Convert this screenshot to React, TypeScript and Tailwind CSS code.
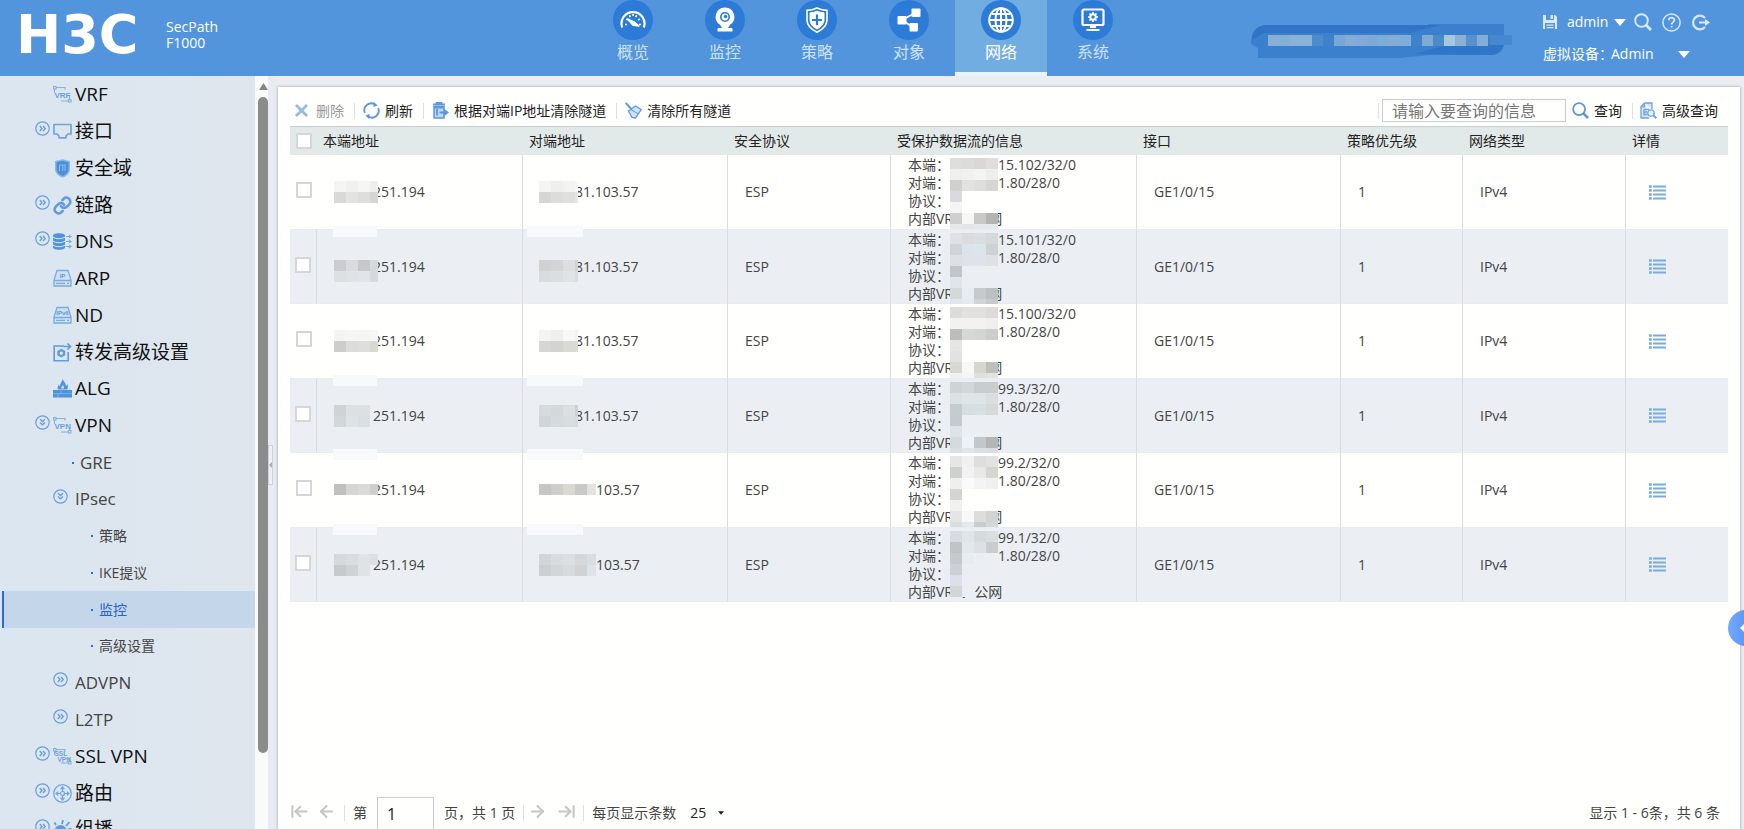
import type { ReactNode } from "react";
import { ArrowLeft, ArrowLeftToLine, ArrowRight, ArrowRightToLine, Link, X } from "lucide-react";

/* ---------- navigation icons (26x26 inside the blue disc) ---------- */

const GaugeIcon = () => (
  <svg viewBox="0 0 26 26" className="size-[26px]" fill="none" stroke="white" strokeWidth="2.2">
    <path d="M2.2 20.500A11.500 11.500 0 1 1 23.8 20.500" />
    <path d="M5 17.500h2M19 17.500h2M6.200 12l1.700 1.200M19.800 12l-1.700 1.200M9.500 8.200l.8 1.900M16.500 8.200l-.8 1.900M13 7v2" strokeWidth="1.600" />
    <path d="M7.500 12l6.500 2.800 5 4.200-6-.6z" fill="white" strokeWidth="1.400" strokeLinejoin="round" />
  </svg>
);

const CameraIcon = () => (
  <svg viewBox="0 0 26 26" className="size-[26px]">
    <path d="M13 .5a9.300 9.300 0 0 1 5 17.200l-2 3.300h3.500a1 1 0 0 1 1 1v2.500h-15V22a1 1 0 0 1 1-1H10l-2-3.300A9.300 9.300 0 0 1 13 .5z" fill="white" />
    <circle cx="13" cy="10" r="5" fill="#2b7bd7" />
    <circle cx="13" cy="10" r="3.400" fill="white" />
    <circle cx="13.500" cy="9.500" r="1.700" fill="#2b7bd7" />
  </svg>
);

const ShieldIcon = () => (
  <svg viewBox="0 0 26 26" className="size-[26px]" fill="none" stroke="white">
    <path d="M13 1c3 1.500 6.300 2.400 10 2.400v9.400c0 5.500-4.300 9.700-10 12.400C7.300 22.500 3 18.300 3 12.800V3.400C6.700 3.400 10 2.500 13 1z" strokeWidth="1.600" />
    <path d="M13 4.200c2.300 1 4.600 1.600 7 1.700v6.900c0 4-2.900 7-7 9.200-4.100-2.200-7-5.200-7-9.200V5.900c2.400-.1 4.700-.7 7-1.700z" fill="white" strokeWidth="1" />
    <path d="M13 7.500v10.500M8 13h10" stroke="#2b7bd7" strokeWidth="2.200" />
  </svg>
);

const ObjectIcon = () => (
  <svg viewBox="0 0 26 26" className="size-[26px]" fill="white">
    <path d="M6 13 19 6M6 13l12 8" stroke="white" strokeWidth="1.800" />
    <rect x="1.500" y="9" width="9" height="8.500" rx="1" />
    <rect x="15.500" y="1.500" width="9" height="8.500" rx="1" />
    <rect x="13.500" y="16" width="8.500" height="8.500" rx="1" />
  </svg>
);

const GlobeIcon = () => (
  <svg viewBox="0 0 26 26" className="size-[26px]" fill="none" stroke="white" strokeWidth="2">
    <circle cx="13" cy="13" r="11.800" />
    <ellipse cx="13" cy="13" rx="5.500" ry="11.800" />
    <path d="M13 1.500v23M1.500 13h23M3.500 7h19M3.500 19h19" />
  </svg>
);

const SystemIcon = () => (
  <svg viewBox="0 0 26 26" className="size-[26px]" fill="none" stroke="white">
    <rect x="2.500" y="2.500" width="21" height="15.500" rx="1.500" strokeWidth="2.200" />
    <circle cx="13" cy="10" r="2.700" strokeWidth="2" />
    <path d="M13 5v2M13 13v2M8 10h2M16 10h2M9.500 6.500l1.400 1.400M15.100 12.100l1.400 1.400M16.500 6.500l-1.400 1.400M10.900 12.100l-1.400 1.400" strokeWidth="1.600" />
    <path d="M13 18v3" strokeWidth="6" />
    <path d="M6.500 23h13" strokeWidth="2" />
  </svg>
);

/* ---------- sidebar icons ---------- */

const svgClass = "size-[19px]";

const Tag = ({ lines }: { lines: string[] }) => (
  <svg viewBox="0 0 19 19" className={svgClass} fill="none" stroke="#84b0e2" strokeWidth="1.100">
    <path d="M3 2.500h9v2M1.500 4v4M8 16h8M16.500 11v4" />
    <rect x="0.500" y="1.500" width="2.500" height="2.500" />
    <rect x="15.500" y="14.500" width="2.500" height="2.500" />
    {lines.map((t, i) => (
      <text key={t} x={1.500 + i * 3} y={(lines.length > 1 ? 8.500 : 12.500) + i * 6} fontSize={lines.length > 1 ? 6.500 : 8} fontWeight="700" fill="#6a9fdd" stroke="none" fontFamily="Liberation Sans, sans-serif">
        {t}
      </text>
    ))}
  </svg>
);

const PortIcon = () => (
  <svg viewBox="0 0 19 19" className={svgClass} fill="none" stroke="#6ea4e0" strokeWidth="1.700">
    <path d="M1 2.500h17v9.500h-3l-2 2v1.800H6V14l-2-2H1z" strokeLinejoin="round" />
  </svg>
);

const ZoneIcon = () => (
  <svg viewBox="0 0 19 19" className={svgClass}>
    <path d="M9.500.2L17 2v8c0 4.200-3.200 7-7.500 8.800C5.200 17 2 14.200 2 10V2z" fill="#8ab6e8" />
    <path d="M9.500 1.800l6 1.500V10c0 3.200-2.500 5.500-6 7-3.500-1.500-6-3.800-6-7V3.300z" fill="#4a8fdc" />
    <path d="M6.500 6v6M12 6v6M9.800 6v6M6.500 6H13" stroke="#8fbbec" strokeWidth="1" />
  </svg>
);

const DnsIcon = () => (
  <svg viewBox="0 0 19 19" className={svgClass}>
    <path d="M0 3.500C0 .5 12 .5 12 3.500v12c0 3-12 3-12 0z" fill="#4f93dc" />
    <path d="M0 5c2 2.200 10 2.200 12 0M0 9c2 2.200 10 2.200 12 0M0 13c2 2.200 10 2.200 12 0" stroke="#dfe8f1" fill="none" strokeWidth="1" />
    <path d="M13 4.500h4M13 9.500h4M13 14.500h4" stroke="#76aae2" strokeWidth="1.200" />
    <path d="M16 2.500l3 2-3 2zM16 7.500l3 2-3 2zM16 12.500l3 2-3 2z" fill="#76aae2" />
  </svg>
);

const DriveIcon = ({ text }: { text: string }) => (
  <svg viewBox="0 0 19 19" className={svgClass} fill="none" stroke="#79abe2" strokeWidth="1.300">
    <path d="M4 1.500h11l3 9.500v6H1v-6z" fill="#cfe0f3" />
    <path d="M1 11.500h17M3 14.300h9M14 14.300h2" />
    <text x="9.500" y="8.800" textAnchor="middle" fontSize="6" fontWeight="700" fill="#5a97dc" stroke="none" fontFamily="Liberation Sans, sans-serif">
      {text}
    </text>
  </svg>
);

const ForwardIcon = () => (
  <svg viewBox="0 0 19 19" className={svgClass} fill="none" stroke="#5f9bde" strokeWidth="1.600">
    <path d="M11 3H1.200v14.800h14V9" />
    <path d="M10.500 3.500h7M14.500.5l3 3-3 3" />
    <path d="M8.300 5.800l4 2.200v4.300l-4 2.200-4-2.200V8z" fill="#5f9bde" stroke="none" />
    <circle cx="8.300" cy="10.200" r="1.600" fill="#dfe8f1" stroke="none" />
  </svg>
);

const AlgIcon = () => (
  <svg viewBox="0 0 19 19" className={svgClass}>
    <path d="M9.500 0c1 2.500 3.500 4 3.500 7 1-.5 1-1.500 1-2 1.500 2 1 4 0 5.500H5C4 8.500 5 6.500 6 5.500c0 1 .5 1.500 1 1.500C7 4.500 9 3 9.500 0z" fill="#4f93dc" />
    <path d="M0 11h19v7.500H0z" fill="#4f93dc" />
    <path d="M0 14.700h19M8 11v3.500M5 15v3.500" stroke="#8fbbec" strokeWidth=".7" />
    <path d="M8 9.500c0-1.500 1.500-2 1.500-3.500 1 1 2 2 1.500 3.500z" fill="#c9def5" />
  </svg>
);

const RouteIcon = () => (
  <svg viewBox="0 0 19 19" className={svgClass} fill="none" stroke="#6ea4e0" strokeWidth="1.200">
    <circle cx="9.500" cy="9.500" r="8.800" />
    <circle cx="9.500" cy="9.500" r="2" />
    <path d="M9.500 2l2.600 3.200H6.900zM9.500 17l2.600-3.200H6.900zM2 9.500l3.200-2.600v5.200zM17 9.500l-3.200-2.600v5.200z" fill="#6ea4e0" stroke="none" />
    <path d="M9.500 4.500v3M9.500 11.500v3M4.500 9.500h3M11.500 9.500h3" />
  </svg>
);

const CastIcon = () => (
  <svg viewBox="0 0 19 19" className={svgClass}>
    <circle cx="7.500" cy="11" r="6" fill="#5f9bde" />
    <path d="M9 4L10 0M13 6l3.500-4M14.500 9.500l4-1M3 5L1.500 2.500" stroke="#5f9bde" strokeWidth="1.800" />
  </svg>
);

const Expander = ({ open }: { open?: boolean }) => (
  <svg viewBox="0 0 15 15" className="mb-1.5 size-[15px] shrink-0" fill="none" stroke="#6a9fdc" strokeWidth="1.200">
    <circle cx="7.500" cy="7.500" r="6.700" />
    <path d={open ? "M5 4.300l2.500 2.200L10 4.300M5 7.500l2.500 2.200L10 7.500" : "M4.800 5L7 7.500 4.800 10M8 5l2.200 2.500L8 10"} strokeWidth="1.400" />
  </svg>
);

/* ---------- data ---------- */

const navItems = [
  { label: "概览", icon: <GaugeIcon /> },
  { label: "监控", icon: <CameraIcon /> },
  { label: "策略", icon: <ShieldIcon /> },
  { label: "对象", icon: <ObjectIcon /> },
  { label: "网络", icon: <GlobeIcon />, active: true },
  { label: "系统", icon: <SystemIcon /> },
];

type MenuItem = {
  label: string;
  level: 1 | 2 | 3;
  icon?: ReactNode;
  expand?: "open" | "closed";
  active?: boolean;
};

const menu: MenuItem[] = [
  { label: "VRF", level: 1, icon: <Tag lines={["VRF"]} /> },
  { label: "接口", level: 1, icon: <PortIcon />, expand: "closed" },
  { label: "安全域", level: 1, icon: <ZoneIcon /> },
  { label: "链路", level: 1, icon: <Link className="size-[19px] text-[#5f9bde]" strokeWidth={3.200} />, expand: "closed" },
  { label: "DNS", level: 1, icon: <DnsIcon />, expand: "closed" },
  { label: "ARP", level: 1, icon: <DriveIcon text="IP" /> },
  { label: "ND", level: 1, icon: <DriveIcon text="IPv6" /> },
  { label: "转发高级设置", level: 1, icon: <ForwardIcon /> },
  { label: "ALG", level: 1, icon: <AlgIcon /> },
  { label: "VPN", level: 1, icon: <Tag lines={["VPN"]} />, expand: "open" },
  { label: "GRE", level: 2 },
  { label: "IPsec", level: 2, expand: "open" },
  { label: "策略", level: 3 },
  { label: "IKE提议", level: 3 },
  { label: "监控", level: 3, active: true },
  { label: "高级设置", level: 3 },
  { label: "ADVPN", level: 2, expand: "closed" },
  { label: "L2TP", level: 2, expand: "closed" },
  { label: "SSL VPN", level: 1, icon: <Tag lines={["SSL", "VPN"]} />, expand: "closed" },
  { label: "路由", level: 1, icon: <RouteIcon />, expand: "closed" },
  { label: "组播", level: 1, icon: <CastIcon />, expand: "closed" },
];

const rows = [
  {
    local: "251.194", remote: "81.103.57", from: "15.102/32/0",
    localMask: ["#f5f5f4 #f1f1f0 #f6f6f5 #efefee", "#d9d9d6 #e3e3e1 #dededb #d6d6d4"],
    remoteMask: ["#f4f4f3 #efefee #f3f3f2 #f7f7f6", "#d6d6d4 #dcdcda #e0e0de #e6e6e4"],
    flow: ["#dededd #dcdcdb #dad8d6 #dfdedc", "#efefee #f1f1f0 #f4f4f2 #eeeeed", "#d0d0ce #e2e2e0 #dededc #d6d6d4", "#dadade", "#f4f4f4", "#cfcfcf #f7f7f6 #c9c9c7 #b4b4b2", "#e6e8ea #e3e6e9 #e6e8ec #e6e8ea"],
  },
  {
    local: "251.194", remote: "81.103.57", from: "15.101/32/0", strip: true, maskTop: "top-[30px]",
    localMask: ["#c9ccd0 #d9dbde #c6c9cc #d6d9dc", "#dde0e3 #dfe3e7 #e1e5e9 #d6dadd"],
    remoteMask: ["#d0d2d4 #d2d4d6 #dcdedf #cfd1d3", "#d8dcdf #dadee1 #dfe3e6 #dadddf"],
    flow: ["#dfe1e4 #d8dcdf #d9dee2 #d6d9dc", "#ced4d9 #dae4ea #dbe5eb #cdd2d6", "#dde1e6 #dfe2ea #dfe2ea #dde0e4", "#bfc5c8", "#dfe5ea", "#d3d8db #e6edf1 #c6cacc #bcc0c2", "#e0e6ea #e4ebef #d0d4d6 #c6cacc"],
  },
  {
    local: "251.194", remote: "81.103.57", from: "15.100/32/0",
    localMask: ["#f4f5f2 #f6f7f4 #f5f6f3 #f7f8f5", "#cdcdc9 #dcdcd8 #dedfda #d8d9d4"],
    remoteMask: ["#f4f4f3 #efefee #f8f8f8 #f3f3f2", "#d6d6d3 #d3d3d0 #d9d9d6 #dadad7"],
    flow: ["#dddcdc #e2e1e0 #e1e0df #dcdbd9", "#f2f2f2 #f3f2f2 #f3f2f1 #f0efee", "#bdbebb #d6d8d6 #d3d6d4 #cdcecb", "#e6e6e6", "#e2e2e3", "#d6d8d3 #f8f9f7 #d6d7d1 #bfc0bc", "#eff0f1 #f3f5f8 #dfe0dd #e3e4e1"],
  },
  {
    local: "251.194", remote: "81.103.57", from: "99.3/32/0", strip: true,
    localMask: ["#cfd3d6 #dce0e3 #dce0e3", "#d2d7da #dce4e8 #d9dfe3"],
    remoteMask: ["#d6dbdd #d3d8da #dadfe1 #cdd1d5", "#d0d5d7 #d3dbdf #d8dee0 #d6dbde"],
    flow: ["#cfd3d5 #d3d7d9 #c9cdce #cacdcd", "#dae2e4 #dde7e8 #dde6e6 #d9dfdf", "#c4ccd1 #d6dee2 #d8dfe2 #d5d9da", "#c4cacd", "#dde4e8", "#d4dadd #ecf2f5 #c1c8cb #b3b5b6", "#dbdfe4 #e2e5ea #dcdfe3 #d9dce0"],
  },
  {
    local: "251.194", remote: "81.103.57", from: "99.2/32/0", strip: true, wide: true, maskTop: "top-[31px]",
    localMask: ["#c0c0be #d6d6d4 #dadad7 #cfcfcc"],
    remoteMask: ["#c6c6c2 #cececa #d9d9d2 #c9c9c6 #e3e3e2"],
    flow: ["#e6e6e7 #f0f0f1 #dededf #e3e3e3", "#cfd0d0 #f2f2f2 #e8e8e6 #d6d6d3", "#efefef #fafafa #f4f4f4 #f0f0f0", "#d6d4d3", "#f1f1f1", "#e6e5e5 #f8f8f8 #dedddb #d3d3d1", "#d9dce0 #e3e8ec #c9cccd #d3d8dc"],
  },
  {
    local: "251.194", remote: "81.103.57", from: "99.1/32/0", strip: true, wide: true,
    localMask: ["#d6d9dc #dadde0 #dfe3e5 #dce0e3", "#c6cacd #cfd3d5 #e0e3e6"],
    remoteMask: ["#d3d6d9 #d9dcdf #dbdfe1 #d5d8da #dbdee0", "#cbd0d3 #d3d6d8 #d8dbdd #cfd3d4 #dde4e7"],
    flow: ["#d6dce0 #dfe5e9 #d4dade #d9dee1", "#c0c4c7 #e2e8ec #dce2e3 #c9cdce", "#c6cacd #e6ecf1", "#cdd1d5", "#dde0ea", "#d3d6d9 #ebeff4"],
  },
];

const columns = [
  { label: "本端地址", width: "w-[206px]" },
  { label: "对端地址", width: "w-[205px]" },
  { label: "安全协议", width: "w-[163px]" },
  { label: "受保护数据流的信息", width: "w-[246px]" },
  { label: "接口", width: "w-[204px]" },
  { label: "策略优先级", width: "w-[122px]" },
  { label: "网络类型", width: "w-[163px]" },
  { label: "详情", width: "w-[102px]" },
];

/* ---------- small parts ---------- */

// Pixelated cover over the hidden part of an address
function Mask({ grid, width, className }: { grid: string[]; width: number; className: string }) {
  return (
    <svg className={`pointer-events-none absolute ${className}`} width={width} height={Math.min(grid.length * 11, 71)} shapeRendering="crispEdges">
      {grid.map((line, y) => line.split(" ").map((fill, x) => <rect key={`${x}-${y}`} x={x * 12} y={y * 11} width="12" height="11" fill={fill} />))}
    </svg>
  );
}

const Separator = () => <span className="h-4 w-px shrink-0 bg-[#dcdfe3]" />;

const Caret = ({ className }: { className: string }) => (
  <svg viewBox="0 0 12 7" className={className} fill="currentColor">
    <path d="M0 0h12L6 7z" />
  </svg>
);

const SearchIcon = ({ className }: { className: string }) => (
  <svg viewBox="0 0 18 18" className={className} fill="none" stroke="currentColor">
    <circle cx="7.500" cy="7.500" r="6.300" strokeWidth="1.900" />
    <path d="M12 12l5 5" strokeWidth="2.800" />
  </svg>
);

function ToolButton({ icon, label, disabled }: { icon: ReactNode; label: string; disabled?: boolean }) {
  return (
    <button disabled={disabled} className={`flex items-center gap-[5px] whitespace-nowrap ${disabled ? "text-[#999]" : "text-[#222]"}`}>
      {icon}
      {label}
    </button>
  );
}

const Checkbox = ({ label }: { label: string }) => (
  <input type="checkbox" aria-label={label} className="mx-auto block size-4 appearance-none border-2 border-[#d6d6d6] bg-white checked:bg-[#5295dd]" />
);

/* ---------- page sections ---------- */

function Header() {
  return (
    <header className="flex h-[76px] shrink-0 items-start bg-[#5295dd] text-white">
      <div className="flex w-[587px] shrink items-center pt-2 pl-4">
        <span className="w-[150px] font-['DejaVu_Sans'] text-[54px] leading-[54px] font-bold">H3C</span>
        <span className="text-sm leading-4">
          SecPath
          <br />
          F1000
        </span>
      </div>
      <nav className="flex shrink-0">
        {navItems.map((item) => (
          <button
            key={item.label}
            className={`flex h-[76px] w-[92px] flex-col items-center border-b-4 text-base leading-6 ${
              item.active ? "border-[#e6f5fd] bg-[#72ade2]" : "border-transparent text-[#cfe2f8]"
            }`}
          >
            <span className="flex size-10 shrink-0 items-center justify-center rounded-full bg-[#2b7bd7]">{item.icon}</span>
            {item.label}
          </button>
        ))}
      </nav>
      <div className="flex flex-1 justify-end pt-6 pr-7">
        <svg width="265" height="34">
          <path d="M1 20C1 8 6 1 18 1H178V0H254V22C252 28 247 31 240 31H180L150 34H8V24z" fill="#3a80cd" />
          <path d="M2 16C2 8 6 1 18 1H190L160 9H14z" fill="#2f74c6" />
          <path d="M164 30L200 20H254C252 28 247 31 240 31z" fill="#2f76c8" />
          {["#86b0d4", "#84b0d6", "#8ab2d8", "#88b2d6", "#4c8ccc", "#3f82ca", "#7aa8d6", "#86acd6", "#84a8d8", "#7ea8d6", "#7cacd8", "#84acd4", "#80acd8", "#3f82ca", "#7eaad4", "#4c8ac8", "#a6c8de", "#8ab0d6", "#5892cc", "#84acd6"].map((fill, i) => (
            <rect key={i} x={18 + i * 11} y="11" width="11" height="11" fill={fill} shapeRendering="crispEdges" />
          ))}
          <rect x="240" y="11" width="22" height="10" fill="#4587d0" />
        </svg>
      </div>
      <div className="w-[201px] shrink-0 pt-3 text-sm">
        <div className="flex h-5 items-center">
          <button aria-label="保存" className="mr-2.5">
            <svg viewBox="0 0 14 14" className="size-3.5" fill="#d9e9fa">
              <path d="M0 0h3v5h8V0h1l2 2v12h-2V8H2v6H0z" />
              <path d="M7.500 0H10v4H7.500zM3.500 9.500h7v1.200h-7zM3.500 12h7v1.200h-7z" />
            </svg>
          </button>
          <button className="mr-2 flex items-center gap-1.5">
            admin
            <Caret className="h-[7px] w-3" />
          </button>
          <button aria-label="搜索" className="mr-2.5 text-[#d9e9fa]">
            <SearchIcon className="size-[18px]" />
          </button>
          <button aria-label="帮助" className="mr-2.5">
            <svg viewBox="0 0 19 19" className="size-[19px]" fill="none" stroke="#d9e9fa" strokeWidth="1.500">
              <circle cx="9.500" cy="9.500" r="8.600" />
              <path d="M6.800 7.300c0-3.600 5.600-3.400 5.600-.2 0 2-2.800 2.200-2.800 4.400M9.600 13v1.600" strokeWidth="1.700" />
            </svg>
          </button>
          <button aria-label="退出">
            <svg viewBox="0 0 19 17" className="h-[17px] w-[19px]" fill="none" stroke="#d9e9fa" strokeWidth="2.200">
              <path d="M14 4A6.800 6.800 0 1 0 14 13" />
              <path d="M8 8.500h8" strokeWidth="2" />
              <path d="M14 5l5 3.500-5 3.500z" fill="#d9e9fa" stroke="none" />
            </svg>
          </button>
        </div>
        <div className="relative mt-3 flex h-5 items-center">
          <label htmlFor="device" className="w-[68px] whitespace-nowrap">{"虚拟设备\uff1a"}</label>
          <select id="device" className="w-[80px] appearance-none bg-transparent outline-none">
            <option>Admin</option>
          </select>
          <Caret className="pointer-events-none absolute left-[135px] h-[7px] w-3" />
        </div>
      </div>
    </header>
  );
}

function SidebarRow({ item }: { item: MenuItem }) {
  const textClass = {
    1: "pl-[35px] text-[19px] text-[#111]",
    2: "pl-[53px] text-[17px] text-[#444]",
    3: "pl-[91px] text-sm text-[#444]",
  }[item.level];
  const dot = item.level === 3 || !item.expand;

  return (
    <li className="h-[37px] nth-[4n]:h-9">
      <a
        href="#"
        className={`flex h-full items-center whitespace-nowrap ${textClass} ${
          item.active ? "ml-0.5 border-l-2 border-[#2a70c2] bg-[#c3d6ea] !pl-[87px] !text-[#2a62c9]" : ""
        }`}
      >
        {item.level === 1 && (
          <>
            <span className="w-[15px] shrink-0">{item.expand && <Expander open={item.expand === "open"} />}</span>
            <span className="mr-[3px] ml-[3px] flex w-[19px] shrink-0 justify-center">{item.icon}</span>
          </>
        )}
        {item.level === 2 && item.expand && (
          <span className="mr-[7px]">
            <Expander open={item.expand === "open"} />
          </span>
        )}
        {item.level !== 1 && dot && <span className={`size-0.5 shrink-0 bg-[#2a70c2] ${item.level === 2 ? "mr-1.5 ml-[19px]" : "mr-1.5"}`} />}
        {item.label}
      </a>
    </li>
  );
}

function Sidebar() {
  return (
    <aside className="flex shrink-0 overflow-hidden">
      <ul className="w-[255px] bg-linear-to-r from-[#dbe6f0] to-[#dfe6ee]">
        {menu.map((item, i) => (
          <SidebarRow key={i} item={item} />
        ))}
      </ul>
      <div className="flex w-[13px] flex-col items-center bg-[#fafafa] pt-[7px] pl-[3px]">
        <svg viewBox="0 0 9 7" className="h-[7px] w-[9px] shrink-0" fill="#858585">
          <path d="M4.500 0L9 7H0z" />
        </svg>
        <div className="mt-[7px] h-[88%] w-2.5 shrink-0 rounded-full bg-[#8b8b8b]" />
      </div>
      <div className="flex w-2.5 flex-col justify-center bg-[#e8ecf0]">
        <button aria-label="收起菜单" className="mt-6 flex h-10 w-[5px] items-center border border-[#cdd2d6] bg-[#eef1f3]">
          <svg viewBox="0 0 4 8" className="h-2 w-1" fill="#a9adb1">
            <path d="M4 0v8L0 4z" />
          </svg>
        </button>
      </div>
    </aside>
  );
}

function Toolbar() {
  return (
    <div className="flex h-[39px] shrink-0 items-center pt-2 text-sm">
      <div className="flex items-center gap-2.5 pl-1">
        <ToolButton disabled label="删除" icon={<X className="-ml-0.5 size-[19px] text-[#93bce8]" strokeWidth={3.500} />} />
        <Separator />
        <ToolButton
          label="刷新"
          icon={
            <svg viewBox="0 0 18 18" className="-ml-0.5 size-[17px]" fill="none" stroke="#5b98dc" strokeWidth="2">
              <path d="M2 11.500A7.200 7.200 0 0 1 12.500 2.600M16 6.500A7.200 7.200 0 0 1 5.500 15.400" />
              <path d="M11.500 0l4 3.800-4.500 1.400zM6.500 18l-4-3.800L7 12.800z" fill="#5b98dc" stroke="none" />
            </svg>
          }
        />
        <Separator />
        <ToolButton
          label="根据对端IP地址清除隧道"
          icon={
            <svg viewBox="0 0 17 17" className="-ml-0.5 size-[17px]" fill="none" stroke="#5b98dc" strokeWidth="1.500">
              <path d="M1 2.500h12M4.500 2V.8h5V2" strokeWidth="1.800" />
              <path d="M2 4.500v11.500h10V4.500z" fill="#bcd6f2" />
              <path d="M5 7v6.500M2 5.500h10" strokeWidth="1.800" />
              <path d="M7.500 10.500h5" strokeWidth="2" />
              <path d="M12 6.800l5 3.700-5 3.700z" fill="#5b98dc" stroke="none" />
            </svg>
          }
        />
        <Separator />
        <ToolButton
          label="清除所有隧道"
          icon={
            <svg viewBox="0 0 17 17" className="-ml-0.5 size-[17px]" fill="none" stroke="#5b98dc" strokeWidth="1.300">
              <path d="M.8.8l5.500 6.200" strokeWidth="2" />
              <path d="M3.500 9l7-5 5.700 3.500L10.500 16l-3.500-.5z" fill="#cfe2f6" />
              <path d="M6 7.500l7.500 4.500" strokeWidth="1" />
            </svg>
          }
        />
      </div>
      <div className="ml-auto flex items-center pr-2.5">
        <Separator />
        <input
          type="text"
          aria-label="查询信息"
          placeholder="请输入要查询的信息"
          className="mr-1.5 ml-[3px] h-[23px] w-[184px] border border-[#c9ccd0] px-[9px] text-base leading-5 outline-none placeholder:text-[#777]"
        />
        <ToolButton label="查询" icon={<SearchIcon className="size-[17px] text-[#5b98dc]" />} />
        <span className="ml-2.5 flex items-center gap-[7px]">
          <Separator />
          <ToolButton
            label="高级查询"
            icon={
              <svg viewBox="0 0 17 17" className="size-[17px]" fill="none" stroke="#6ea4e0" strokeWidth="1.300">
                <path d="M4.500 1H12v6M4.500 1L1 4.500V16h8" fill="#d3e4f6" />
                <path d="M4.500 1v3.500H1M4 7.500h5M4 10h3M4 12.500h3M4 7.500v6" />
                <circle cx="11" cy="11" r="3.200" fill="#e4effa" />
                <path d="M13.300 13.300l3 3" strokeWidth="2" />
              </svg>
            }
          />
        </span>
      </div>
    </div>
  );
}

function TunnelTable() {
  const cell = "border-r border-[#dadcde] pl-[17px]";
  return (
    <table className="w-full table-fixed border-separate border-spacing-0 text-sm text-[#444]">
      <thead>
        <tr className="h-[29px] bg-[#e2eae9] text-left text-[#222]">
          <th className="w-[27px] border-t border-[#c9cdce]">
            <Checkbox label="全选" />
          </th>
          {columns.map((c) => (
            <th key={c.label} className={`${c.width} border-t border-[#c9cdce] pl-1.5 font-normal whitespace-nowrap`}>
              {c.label}
            </th>
          ))}
        </tr>
      </thead>
      <tbody>
        {rows.map((r, i) => (
          <tr key={r.from} className="h-[75px] even:h-[74px] even:bg-[#ebeff4] [&>td]:border-b [&>td]:border-b-[#e9ebec] [&:nth-child(even)>td:first-child]:border-r">
            <td className="border-[#d9dcdf] pb-1">
              <Checkbox label={`选择第 ${i + 1} 行`} />
            </td>
            <td className={`relative ${cell}`}>
              <span className="pl-[39px]">{r.local}</span>
              {r.strip && <span className="absolute -top-1 left-4 h-[11px] w-11 bg-[#f8f9fb]" />}
              <Mask grid={r.localMask} width={44} className={`left-[17px] ${r.maskTop ?? "top-[26px]"}`} />
            </td>
            <td className={`relative ${cell}`}>
              <span className={r.wide ? "pl-14" : "pl-[35px]"}>{r.wide ? "103.57" : r.remote}</span>
              {r.strip && <span className="absolute -top-1 left-1 h-[11px] w-14 bg-[#f8f9fb]" />}
              <Mask grid={r.remoteMask} width={r.wide ? 57 : 39} className={`left-4 ${r.maskTop ?? "top-[26px]"}`} />
            </td>
            <td className={cell}>ESP</td>
            <td className={`relative leading-[18px] ${cell}`}>
              <div className="flex">
                <span className="w-[90px]">{"本端\uff1a"}</span>
                {r.from}
              </div>
              <div className="flex">
                <span className="w-[90px]">{"对端\uff1a"}</span>
                1.80/28/0
              </div>
              <div>{"协议\uff1a"}</div>
              <div>{"内部VRF\uff1a公网"}</div>
              <Mask grid={r.flow} width={48} className="top-[3px] left-[59px]" />
            </td>
            <td className={cell}>GE1/0/15</td>
            <td className={cell}>1</td>
            <td className={cell}>IPv4</td>
            <td className="pl-[23px]">
              <button aria-label="详情" className="block">
                <svg viewBox="0 0 17 15" className="h-[15px] w-[17px]" stroke="#79abe0" strokeWidth="1.800">
                  <path d="M4 1.500h13M4 5.500h13M4 9.500h13M4 13.500h13" />
                  <path d="M0 1.500h2.800M0 5.500h2.800M0 9.500h2.800M0 13.500h2.800" strokeWidth="2.600" />
                </svg>
              </button>
            </td>
          </tr>
        ))}
      </tbody>
    </table>
  );
}

function Pager() {
  const arrow = "size-[19px] -translate-y-0.5 text-[#c6c6c6]";
  return (
    <div className="flex h-8 shrink-0 items-center text-sm whitespace-nowrap text-[#444]">
      <button aria-label="首页" disabled>
        <ArrowLeftToLine className={arrow} strokeWidth={2.600} />
      </button>
      <button aria-label="上一页" disabled className="ml-2">
        <ArrowLeft className={arrow} strokeWidth={2.600} />
      </button>
      <span className="mr-2 ml-2 flex">
        <Separator />
      </span>
      <label htmlFor="page">第</label>
      <input id="page" type="text" defaultValue="1" className="mx-2.5 h-8 w-[57px] border border-b-0 border-[#c9ccd0] px-[9px] text-base text-[#222] outline-none" />
      <span>{"页\uff0c共 1 页"}</span>
      <span className="mr-1 ml-2 flex">
        <Separator />
      </span>
      <button aria-label="下一页" disabled>
        <ArrowRight className={arrow} strokeWidth={2.600} />
      </button>
      <button aria-label="末页" disabled className="ml-2.5">
        <ArrowRightToLine className={arrow} strokeWidth={2.600} />
      </button>
      <span className="mr-2 ml-[7px] flex">
        <Separator />
      </span>
      <label htmlFor="size">每页显示条数</label>
      <span className="relative ml-3.5 flex items-center text-[#222]">
        <select id="size" className="w-9 appearance-none bg-transparent outline-none">
          <option>25</option>
        </select>
        <Caret className="pointer-events-none absolute right-0.5 h-1 w-1.5" />
      </span>
      <span className="mr-2 ml-auto">{"显示 1 - 6条\uff0c共 6 条"}</span>
    </div>
  );
}

export default function App() {
  return (
    <div className="relative flex h-screen flex-col overflow-hidden bg-[#ebedf0] font-['Open_Sans','Noto_Sans_CJK_SC',sans-serif]">
      <Header />
      <div className="flex min-h-0 flex-1">
        <Sidebar />
        <main className="mt-[11px] mr-1 flex min-w-0 flex-1 flex-col bg-[#fffffd] px-3 shadow-[0_0_3px_#9a9fa5]">
          <Toolbar />
          <div className="min-h-0 flex-1">
            <TunnelTable />
          </div>
          <Pager />
        </main>
      </div>
      {/* floating drawer handle on the right edge */}
      <button aria-label="展开侧栏" className="absolute -right-5 bottom-[183px] flex size-9 items-center rounded-full bg-linear-to-r from-[#76a9fb] to-[#3f80f5] pl-3">
        <svg viewBox="0 0 8 12" className="h-3 w-2" fill="none" stroke="white" strokeWidth="3">
          <path d="M7 1L2 6l5 5" />
        </svg>
      </button>
    </div>
  );
}
